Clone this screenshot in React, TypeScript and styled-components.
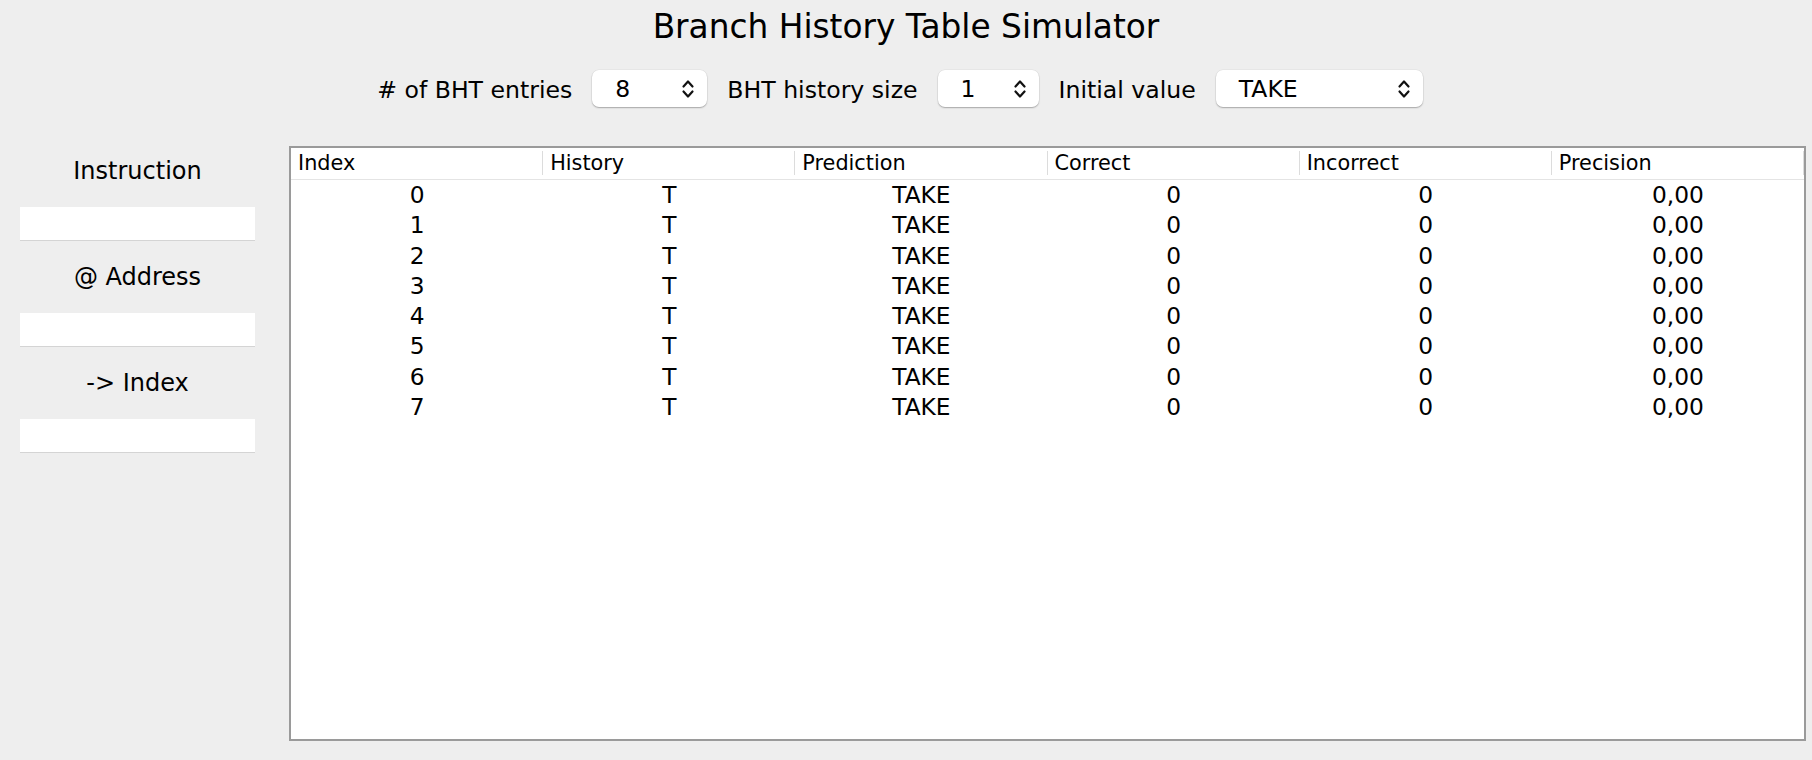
import React from "react";
import styled, { createGlobalStyle } from "styled-components";

const Global = createGlobalStyle`
  html, body { margin: 0; padding: 0; background: #eeeeee; }
  body { font-family: "DejaVu Sans", "Noto Sans", sans-serif; color: #000; }
  * { box-sizing: border-box; }
`;

const Page = styled.div`
  width: 1812px;
  height: 760px;
  background: #eeeeee;
  display: flex;
  flex-direction: column;
  overflow: hidden;
`;

const Title = styled.h1`
  margin: 0;
  padding-top: 6px;
  height: 48px;
  line-height: 42px;
  text-align: center;
  font-size: 32.8px;
  font-weight: normal;
  color: #000;
`;

const Controls = styled.div`
  margin-top: 22px;
  height: 37px;
  display: flex;
  justify-content: center;
  align-items: center;
  gap: 20px;
  padding-right: 12px;
`;

const ControlLabel = styled.span`
  font-size: 23.6px;
  line-height: 37px;
  margin-top: 4px;
  color: #000;
`;

const Spinner = styled.div<{ $w: number }>`
  width: ${(p) => p.$w}px;
  height: 37px;
  background: #fff;
  border-radius: 7px;
  box-shadow: 0 1px 1.5px rgba(0, 0, 0, 0.28), 0 0 0 0.5px rgba(0, 0, 0, 0.06);
  display: flex;
  align-items: center;
  justify-content: space-between;
  padding: 0 12px 0 23px;
  font-size: 23.5px;
  color: #000;
`;

const Chevron = () => (
  <svg width="14" height="22" viewBox="0 0 14 22" fill="none">
    <path d="M2.5 8.5 L7 3.5 L11.5 8.5" stroke="#111" strokeWidth="2.2" strokeLinecap="round" strokeLinejoin="round" />
    <path d="M2.5 13.5 L7 18.5 L11.5 13.5" stroke="#111" strokeWidth="2.2" strokeLinecap="round" strokeLinejoin="round" />
  </svg>
);

const Main = styled.div`
  margin-top: 39px;
  display: flex;
  padding-left: 20px;
  gap: 34px;
  height: 595px;
`;

const LeftPanel = styled.div`
  width: 235px;
  display: flex;
  flex-direction: column;
  gap: 11px;
`;

const FieldLabel = styled.div`
  height: 50px;
  line-height: 51px;
  text-align: center;
  font-size: 24px;
  color: #000;
`;

const Field = styled.div`
  height: 34px;
  background: #fff;
  border-bottom: 1px solid #d4d4d4;
`;

const Table = styled.div`
  width: 1517px;
  height: 595px;
  background: #fff;
  border: 2px solid #9a9a9a;
`;

const HeaderRow = styled.div`
  display: grid;
  grid-template-columns: repeat(6, 1fr);
  height: 32px;
  border-bottom: 1px solid #e4e4e4;
`;

const HeaderCell = styled.div`
  position: relative;
  font-size: 20.8px;
  line-height: 31px;
  padding-left: 7px;
  color: #000;
  &::after {
    content: "";
    position: absolute;
    right: 0;
    top: 3px;
    bottom: 4px;
    width: 1px;
    background: #dcdcdc;
  }
`;

const Row = styled.div`
  display: grid;
  grid-template-columns: repeat(6, 1fr);
  height: 30.3px;
`;

const Cell = styled.div`
  text-align: center;
  font-size: 23.3px;
  line-height: 30px;
  color: #000;
`;

const headers = ["Index", "History", "Prediction", "Correct", "Incorrect", "Precision"];

export default function App() {
  const rows = Array.from({ length: 8 }, (_, i) => [String(i), "T", "TAKE", "0", "0", "0,00"]);
  return (
    <Page>
      <Global />
      <Title>Branch History Table Simulator</Title>
      <Controls>
        <ControlLabel># of BHT entries</ControlLabel>
        <Spinner $w={115}>
          <span>8</span>
          <Chevron />
        </Spinner>
        <ControlLabel>BHT history size</ControlLabel>
        <Spinner $w={101}>
          <span>1</span>
          <Chevron />
        </Spinner>
        <ControlLabel>Initial value</ControlLabel>
        <Spinner $w={207}>
          <span>TAKE</span>
          <Chevron />
        </Spinner>
      </Controls>
      <Main>
        <LeftPanel>
          <FieldLabel>Instruction</FieldLabel>
          <Field />
          <FieldLabel>@ Address</FieldLabel>
          <Field />
          <FieldLabel>-&gt; Index</FieldLabel>
          <Field />
        </LeftPanel>
        <Table>
          <HeaderRow>
            {headers.map((h) => (
              <HeaderCell key={h}>{h}</HeaderCell>
            ))}
          </HeaderRow>
          {rows.map((r, i) => (
            <Row key={i}>
              {r.map((c, j) => (
                <Cell key={j}>{c}</Cell>
              ))}
            </Row>
          ))}
        </Table>
      </Main>
    </Page>
  );
}
